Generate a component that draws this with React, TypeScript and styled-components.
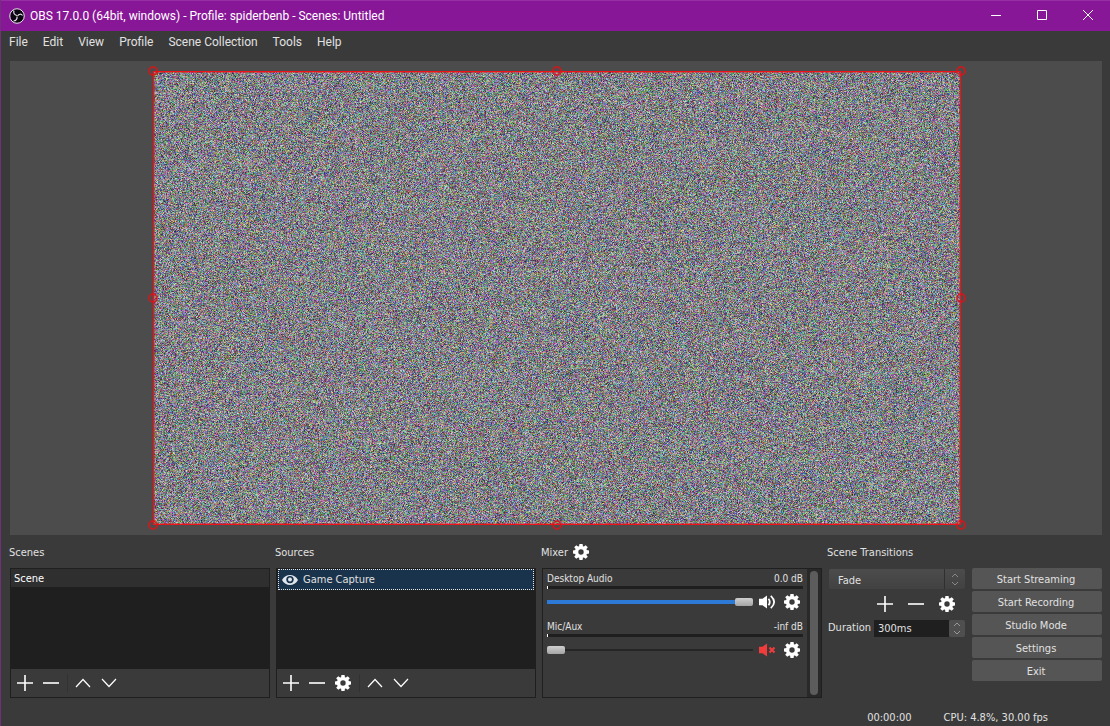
import React, { useEffect, useRef } from "react";
import styled, { createGlobalStyle, css } from "styled-components";

const Global = createGlobalStyle`
  * { box-sizing: border-box; }
  html, body { margin: 0; background: #3a3a3a; }
  body { font-family: "DejaVu Sans Condensed", "DejaVu Sans", sans-serif; font-size: 11px; color: #e1e1e1; }
  button, input, select { font: inherit; color: inherit; margin: 0; }
  ul { list-style: none; margin: 0; padding: 0; }
  h1, h2 { margin: 0; font-size: inherit; font-weight: 400; }
`;

const Window = styled.div`
  min-height: 100vh;
  display: flex;
  flex-direction: column;
  background: #3a3a3a;
  border-left: 1px solid #71307c;
`;

const TitleBar = styled.header`
  height: 31px;
  flex: none;
  display: flex;
  align-items: center;
  padding-left: 8px;
  gap: 5px;
  background: #881798;
  border-top: 1px solid #962fa4;
  color: #fff;
  font-family: Roboto, sans-serif;
  font-size: 12px;
`;

const Title = styled.h1`
  flex: 1;
  white-space: nowrap;
`;

const Caption = styled.div`
  display: flex;
`;

const CaptionButton = styled.button`
  width: 46px;
  height: 30px;
  padding: 0 0 2px 2px;
  border: 0;
  background: none;
  display: grid;
  place-items: center;
`;

const MenuBar = styled.nav`
  height: 22px;
  display: flex;
  align-items: center;
  gap: 15px;
  padding-left: 8px;
  font-family: Roboto, sans-serif;
  font-size: 12px;
`;

const MenuButton = styled.button`
  padding: 0;
  border: 0;
  background: none;
  white-space: nowrap;
`;

const Preview = styled.main`
  flex: 1;
  min-height: 200px;
  margin: 8px 8px 0 9px;
  padding: 10px 9px 10px 11px;
  display: flex;
  background: #4c4c4c;
`;

const Stage = styled.div`
  flex: 1;
  container-type: size;
  display: grid;
  place-items: center;
`;

const Frame = styled.div`
  position: relative;
  width: min(100cqw, round(up, 100cqh * 16 / 9, 2px));
  max-height: 100cqh;
  aspect-ratio: 16 / 9;

  &::after {
    content: "";
    position: absolute;
    inset: 0;
    border: 1px solid #ee1219;
    box-shadow: inset 0 0 0 1px rgba(238, 18, 25, 0.4);
  }
`;

const NoiseCanvas = styled.canvas`
  display: block;
  width: 100%;
  height: 100%;
  image-rendering: pixelated;
`;

const Handle = styled.span<{ $x: number; $y: number }>`
  position: absolute;
  z-index: 1;
  left: ${(p) => p.$x}%;
  top: ${(p) => p.$y}%;
  width: 10px;
  height: 10px;
  margin: -5px;
  border: 2px solid rgba(225, 18, 22, 0.75);
  border-radius: 50%;
`;

const Docks = styled.section`
  display: grid;
  grid-template-columns: 1fr 1fr 280px 138px 130px;
  column-gap: 6px;
  margin: 0 8px 0 9px;
`;

const Dock = styled.section`
  display: flex;
  flex-direction: column;
  min-width: 0;
`;

const DockTitle = styled.h2`
  height: 33px;
  margin-left: -1px;
  display: flex;
  align-items: center;
  gap: 5px;
`;

const DockName = styled.span`
  padding-top: 1px;
`;

const Box = styled.div`
  height: 130px;
  display: flex;
  flex-direction: column;
  border: 1px solid #1f1f1f;
`;

const List = styled.ul`
  flex: 1;
  background: #1f1f1f;
`;

const SceneItem = styled.li`
  height: 18px;
  padding-left: 3px;
  line-height: 19px;
  background: #2f2f2f;
  color: #fff;
`;

const SourceItem = styled.li`
  height: 21px;
  margin: 0 1px;
  padding-left: 3px;
  display: flex;
  align-items: center;
  gap: 5px;
  line-height: 20px;
  background: #19334c;
  border: 1px dotted #e6e6e6;
`;

const Toolbar = styled.div`
  height: 28px;
  display: flex;
  align-items: center;
  gap: 2px;
  padding-left: 2px;
`;

const Divider = styled.span`
  width: 1px;
  height: 18px;
  margin: 0 1px 0 2px;
  background: #323232;
`;

const IconButton = styled.button<{ $w?: number }>`
  width: ${(p) => p.$w ?? 24}px;
  height: 20px;
  padding: 0;
  border: 0;
  background: none;
  color: #fff;
  display: grid;
  place-items: center;
`;

const MixerBox = styled(Box)`
  flex-direction: row;
`;

const Channels = styled.div`
  flex: 1;
  min-width: 0;
  padding: 0 4px;
`;

const Channel = styled.div`
  height: 48px;
  padding-top: 2px;
  font-size: 10px;
`;

const ChannelHead = styled.div`
  display: flex;
  justify-content: space-between;
  height: 14px;
  line-height: 16px;
`;

const Meter = styled.div`
  height: 3px;
  margin-top: 1px;
  background: #1f1f1f;
  border-left: 1px solid #fff;
`;

const ChannelControls = styled.div`
  display: flex;
  align-items: center;
  height: 25px;
`;

const thumb = css`
  appearance: none;
  width: 18px;
  height: 8px;
  border: 0;
  border-radius: 2px;
  background: linear-gradient(#cfcfcf, #a4a4a4);
`;

const Volume = styled.input<{ $muted: boolean }>`
  appearance: none;
  flex: 1;
  min-width: 0;
  height: 10px;
  background: linear-gradient(
      ${(p) => (p.$muted ? "#262626, #262626" : "#2d7ad6, #2d7ad6")}
    ) center / 100% ${(p) => (p.$muted ? 2 : 4)}px no-repeat;
  &::-webkit-slider-thumb { ${thumb} }
`;

const ScrollTrack = styled.div`
  width: 14px;
  padding: 2px 3px;
  display: flex;
  background: #292929;
`;

const ScrollThumb = styled.div`
  flex: 1;
  border-radius: 4px;
  background: #5c5c5c;
`;

const SelectWrap = styled.div`
  position: relative;
  height: 20px;
  margin: 1px 1px 0;
`;

const Select = styled.select`
  appearance: none;
  width: 100%;
  height: 100%;
  padding: 2px 9px 0;
  border: 0;
  border-radius: 2px;
  background: linear-gradient(90deg, transparent 115px, #303030 115px, #303030 116px, transparent 116px),
    linear-gradient(#4c4c4c, #424242);
`;

const Arrows = styled.svg`
  position: absolute;
  right: 6px;
  top: 4px;
  pointer-events: none;
`;

const TransitionTools = styled.div`
  height: 30px;
  display: flex;
  justify-content: flex-end;
  align-items: center;
  gap: 7px;
  padding-right: 7px;
`;

const DurationRow = styled.div`
  display: flex;
  align-items: center;
  gap: 3px;
  padding-right: 1px;
  line-height: 18px;
`;

const Spin = styled.div`
  flex: 1;
  display: flex;
  height: 17px;
`;

const SpinInput = styled.input`
  flex: 1;
  width: 0;
  padding: 1px 4px 0;
  border: 0;
  background: #1f1f1f;
`;

const SpinButton = styled.button`
  width: 16px;
  padding: 0;
  border: 0;
  border-radius: 2px;
  background: #4f4f4f;
  color: #999;
  display: grid;
  place-items: center;
`;

const Controls = styled.div`
  display: flex;
  flex-direction: column;
  gap: 2px;
  padding-top: 33px;
`;

const ControlButton = styled.button`
  height: 21px;
  padding: 2px 2px 0 0;
  border: 0;
  border-radius: 2px;
  background: #555;
`;

const StatusBar = styled.footer`
  height: 28px;
  display: flex;
  justify-content: flex-end;
  align-items: center;
  gap: 32px;
  padding: 10px 62px 0 0;
`;

const Logo = () => (
  <svg width="16" height="16" viewBox="0 0 32 32" aria-hidden="true">
    <circle cx="16" cy="16" r="14.5" fill="#0c0610" stroke="#efe4f2" strokeWidth="2" />
    <g fill="none" stroke="#e8e0ea" strokeWidth="2.4">
      <path d="M16 15 C11 14 8 10 10 5" />
      <path d="M17 16 C20 12 24 11 27 15" />
      <path d="M16 17 C17 22 14 26 9 26" />
    </g>
  </svg>
);

const Gear = () => (
  <svg width="16" height="16" viewBox="0 0 16 16" fill="currentColor" aria-hidden="true">
    <path
      fillRule="evenodd"
      d="M6.4 0h3.2l.3 2.2 1 .4L12.7 1.2l2.1 2.1-1.4 1.8.4 1 2.2.3v3.2l-2.2.3-.4 1 1.4 1.8-2.1 2.1-1.8-1.4-1 .4L9.6 16H6.4l-.3-2.2-1-.4-1.8 1.4-2.1-2.1 1.4-1.8-.4-1L0 9.6V6.4l2.2-.3.4-1L1.2 3.3l2.1-2.1 1.8 1.4 1-.4ZM8 5.3a2.7 2.7 0 1 0 0 5.4 2.7 2.7 0 0 0 0-5.4Z"
    />
  </svg>
);

const Line = ({ d, w = 16, h = 16, sw = 1 }: { d: string; w?: number; h?: number; sw?: number }) => (
  <svg width={w} height={h} viewBox={`0 0 ${w} ${h}`} fill="none" stroke="currentColor" strokeWidth={sw} aria-hidden="true">
    <path d={d} />
  </svg>
);

const Plus = () => <Line d="M0 8h16M8 0v16" sw={1.6} />;
const Minus = () => <Line d="M0 8h16" sw={1.6} />;
const Up = () => <Line d="M1 12L8 4.5L15 12" sw={1.2} />;
const Down = () => <Line d="M1 4L8 11.5L15 4" sw={1.2} />;
const upDown = "M1 4L4 1L7 4M1 9L4 12L7 9";

const Eye = () => (
  <svg width="16" height="12" viewBox="0 0 16 12" aria-hidden="true">
    <path d="M0 6C3.5-.8 12.5-.8 16 6C12.5 12.8 3.5 12.8 0 6Z" fill="#dfe6ee" />
    <circle cx="8" cy="5.6" r="3.7" fill="#19334c" />
    <circle cx="8" cy="5.6" r="2" fill="#dfe6ee" />
  </svg>
);

const Speaker = ({ muted = false }: { muted?: boolean }) => (
  <svg width="17" height="14" viewBox="0 0 17 14" fill="none" stroke={muted ? "#f23c3c" : "#fff"} aria-hidden="true">
    <path d="M0 3.8h3.5L8 .5v13L3.5 10.2H0Z" fill={muted ? "#f23c3c" : "#fff"} stroke="none" />
    {muted ? (
      <path d="M10.5 4.5l5 5M15.5 4.5l-5 5" strokeWidth="2" />
    ) : (
      <path d="M9.5 3.8Q12 7 9.5 10.2M11.8.8Q18.5 7 11.8 13.2" strokeWidth="1.8" />
    )}
  </svg>
);

const Noise = () => {
  const ref = useRef<HTMLCanvasElement>(null);
  useEffect(() => {
    const canvas = ref.current!;
    const draw = () => {
      const w = canvas.clientWidth;
      const h = canvas.clientHeight;
      if (!w || !h) return;
      canvas.width = w;
      canvas.height = h;
      const ctx = canvas.getContext("2d")!;
      const image = ctx.createImageData(w, h);
      let seed = 170017;
      const next = () => {
        seed ^= seed << 13;
        seed ^= seed >>> 17;
        seed ^= seed << 5;
        return (seed >>> 0) / 4294967296;
      };
      for (let i = 0; i < image.data.length; i += 4) {
        const luma = next() * 80;
        image.data[i] = 28 + luma + next() * 120;
        image.data[i + 1] = 28 + luma + next() * 120;
        image.data[i + 2] = 34 + luma + next() * 120;
        image.data[i + 3] = 255;
      }
      ctx.putImageData(image, 0, 0);
    };
    draw();
    const observer = new ResizeObserver(draw);
    observer.observe(canvas);
    return () => observer.disconnect();
  }, []);
  return <NoiseCanvas ref={ref} aria-label="Game capture preview" />;
};

const handles = [[0, 0], [50, 0], [100, 0], [0, 50], [100, 50], [0, 100], [50, 100], [100, 100]];
const menus = ["File", "Edit", "View", "Profile", "Scene Collection", "Tools", "Help"];
const controls = ["Start Streaming", "Start Recording", "Studio Mode", "Settings", "Exit"];

const ListTools = ({ settings = false }: { settings?: boolean }) => (
  <Toolbar>
    <IconButton aria-label="Add"><Plus /></IconButton>
    <IconButton aria-label="Remove"><Minus /></IconButton>
    {settings && <IconButton aria-label="Properties"><Gear /></IconButton>}
    <Divider />
    <IconButton aria-label="Move up"><Up /></IconButton>
    <IconButton aria-label="Move down"><Down /></IconButton>
  </Toolbar>
);

type ChannelProps = { name: string; level: string; value: number; muted?: boolean };

const MixerChannel = ({ name, level, value, muted = false }: ChannelProps) => (
  <Channel>
    <ChannelHead><span>{name}</span><span>{level}</span></ChannelHead>
    <Meter />
    <ChannelControls>
      <Volume type="range" aria-label={name} defaultValue={value} $muted={muted} />
      <IconButton $w={28} aria-label={`Mute ${name}`}><Speaker muted={muted} /></IconButton>
      <IconButton $w={22} aria-label={`${name} settings`}><Gear /></IconButton>
    </ChannelControls>
  </Channel>
);

export default function App() {
  return (
    <>
      <Global />
      <Window>
        <TitleBar>
          <Logo />
          <Title>OBS 17.0.0 (64bit, windows) - Profile: spiderbenb - Scenes: Untitled</Title>
          <Caption>
            <CaptionButton aria-label="Minimize"><Line w={10} h={10} d="M0 5.5h10" /></CaptionButton>
            <CaptionButton aria-label="Maximize"><Line w={10} h={10} d="M.5.5h9v9h-9z" /></CaptionButton>
            <CaptionButton aria-label="Close"><Line w={10} h={10} d="M0 0l10 10M10 0L0 10" /></CaptionButton>
          </Caption>
        </TitleBar>
        <MenuBar>{menus.map((m) => <MenuButton key={m}>{m}</MenuButton>)}</MenuBar>
        <Preview>
          <Stage>
            <Frame>
              <Noise />
              {handles.map(([x, y]) => <Handle key={`${x}-${y}`} $x={x} $y={y} />)}
            </Frame>
          </Stage>
        </Preview>
        <Docks>
          <Dock>
            <DockTitle><DockName>Scenes</DockName></DockTitle>
            <Box><List><SceneItem>Scene</SceneItem></List><ListTools /></Box>
          </Dock>
          <Dock>
            <DockTitle><DockName>Sources</DockName></DockTitle>
            <Box><List><SourceItem><Eye />Game Capture</SourceItem></List><ListTools settings /></Box>
          </Dock>
          <Dock>
            <DockTitle>
              <DockName>Mixer</DockName>
              <IconButton $w={16} aria-label="Mixer settings"><Gear /></IconButton>
            </DockTitle>
            <MixerBox>
              <Channels>
                <MixerChannel name="Desktop Audio" level="0.0 dB" value={100} />
                <MixerChannel name="Mic/Aux" level="-inf dB" value={0} muted />
              </Channels>
              <ScrollTrack><ScrollThumb /></ScrollTrack>
            </MixerBox>
          </Dock>
          <Dock>
            <DockTitle><DockName>Scene Transitions</DockName></DockTitle>
            <SelectWrap>
              <Select aria-label="Scene transition"><option>Fade</option></Select>
              <Arrows width="8" height="13" viewBox="0 0 8 13" fill="none" stroke="#888"><path d={upDown} /></Arrows>
            </SelectWrap>
            <TransitionTools>
              <IconButton aria-label="Add transition"><Plus /></IconButton>
              <IconButton aria-label="Remove transition"><Minus /></IconButton>
              <IconButton aria-label="Transition properties"><Gear /></IconButton>
            </TransitionTools>
            <DurationRow>
              <label htmlFor="duration">Duration</label>
              <Spin>
                <SpinInput id="duration" defaultValue="300ms" />
                <SpinButton aria-label="Change duration"><Line w={8} h={13} d={upDown} /></SpinButton>
              </Spin>
            </DurationRow>
          </Dock>
          <Controls>{controls.map((c) => <ControlButton key={c}>{c}</ControlButton>)}</Controls>
        </Docks>
        <StatusBar><span>00:00:00</span><span>CPU: 4.8%, 30.00 fps</span></StatusBar>
      </Window>
    </>
  );
}
